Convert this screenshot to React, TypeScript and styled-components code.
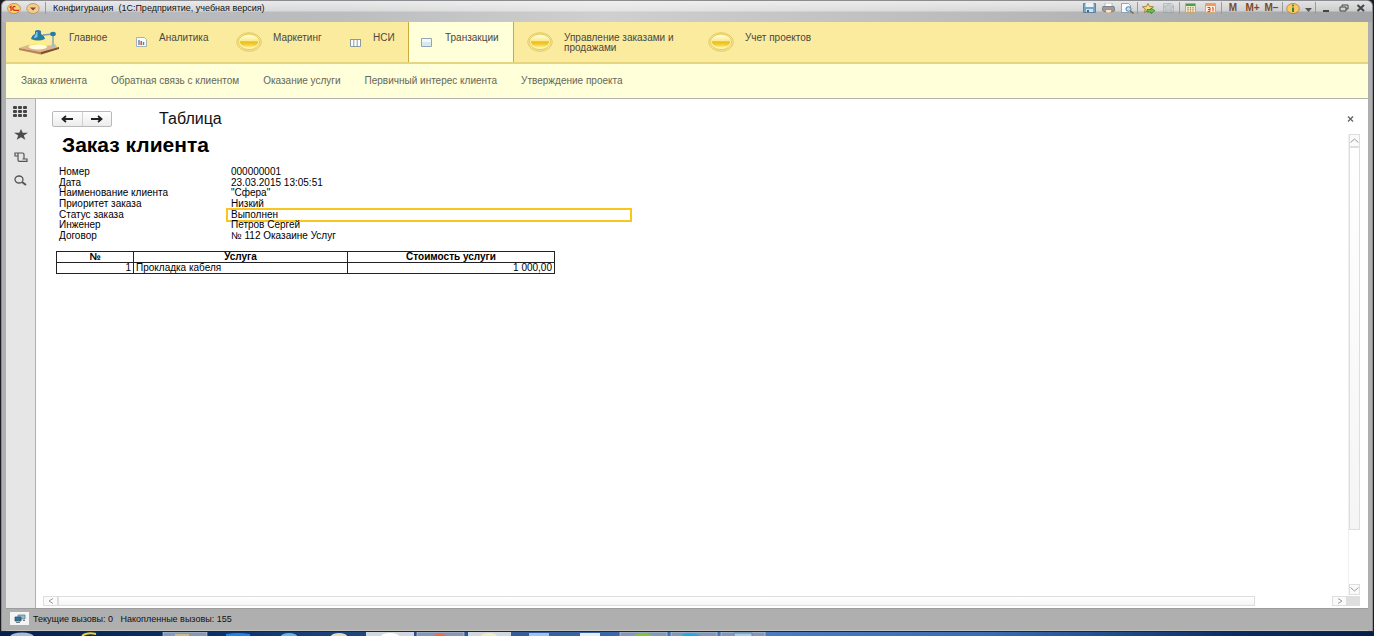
import React from 'react';
import styled, { createGlobalStyle, css } from 'styled-components';

const Global = createGlobalStyle`
  *, *::before, *::after { box-sizing: border-box; }
  body { margin: 0; background: #1b1b22; font-family: "Liberation Sans", Arial, sans-serif; font-size: 10px; line-height: 10px; color: #222; }
  button { font: inherit; color: inherit; padding: 0; border: 0; background: none; }
  a { color: inherit; text-decoration: none; }
  h1, h2, dl, dd, p { margin: 0; }
  svg { display: block; flex: none; }
`;

const Screen = styled.div`
  min-height: 100vh;
  display: flex;
  flex-direction: column;
`;

const AppWindow = styled.div`
  flex: 1;
  display: flex;
  flex-direction: column;
  margin: 0 1px;
  padding: 0 4px;
  border-radius: 6px 6px 0 0;
  background: #afafaf;
  border: solid #8c8c90;
  border-width: 1px 1px 0 1px;
`;

const TitleBar = styled.header`
  height: 21px;
  margin: 0 -4px;
  padding: 0 4px 7px 4px;
  display: flex;
  align-items: center;
  border-radius: 5px 5px 0 0;
  background:
    linear-gradient(#ffffffb0 0, #ffffff70 10px, #ffffff00 11px),
    linear-gradient(90deg, #b4b5b8 0, #bcbdbf 25%, #cfcfcf 44%, #bcbcbc 70%, #a2a3a6 100%);
`;

const TitleButton = styled.button<{ $w: number }>`
  width: ${(p) => p.$w}px;
  height: 14px;
  display: flex;
  align-items: center;
  justify-content: center;
`;

const MemoryButton = styled(TitleButton)`
  font-weight: 700;
  color: #7a4a28;
`;

const Divider = styled.span`
  width: 1px;
  height: 12px;
  margin: 0 1px;
  background: #9a9a9c;
`;

const TitleText = styled.span`
  margin-left: 6px;
  font-size: 9px;
  white-space: pre;
  color: #111;
`;

const Spacer = styled.span`
  flex: 1;
`;

const Sections = styled.nav`
  height: 42px;
  display: flex;
  background: #fbeb9e;
  border-bottom: 2px solid #e5d57f;
`;

const Section = styled.a<{ $icon: number; $gap: number; $w: number; $active?: boolean }>`
  width: ${(p) => p.$w}px;
  padding-left: 12px;
  display: grid;
  grid-template-columns: ${(p) => p.$icon}px 1fr;
  column-gap: ${(p) => p.$gap}px;
  color: #4b4740;
  border: solid transparent;
  border-width: 0 1px;
  ${(p) =>
    p.$active &&
    css`
      background: #ffffd9;
      border-color: #c9ad3c;
    `}
`;

const SectionIcon = styled.span`
  align-self: center;
`;

const SectionName = styled.span`
  padding-top: 11px;
`;

const Commands = styled.nav`
  height: 35px;
  display: flex;
  align-items: center;
  gap: 24px;
  padding-left: 15px;
  background: #ffffd9;
  border-bottom: 1px solid #b4b4ac;
  color: #66665a;
`;

const Body = styled.div`
  flex: 1;
  display: flex;
  background: #fff;
`;

const Tools = styled.aside`
  width: 30px;
  padding-top: 6px;
  display: flex;
  flex-direction: column;
  align-items: center;
  gap: 11px;
  background: #e6e6e6;
  border-right: 1px solid #b0b0b0;
`;

const ToolButton = styled.button`
  width: 16px;
  height: 12px;
  display: grid;
  place-items: center;
`;

const Content = styled.main`
  flex: 1;
  display: flex;
  flex-direction: column;
  min-width: 0;
`;

const FormHeader = styled.div`
  height: 35px;
  padding: 5px 12px 0 16px;
  display: flex;
  align-items: center;
`;

const History = styled.div`
  width: 60px;
  height: 16px;
  display: flex;
  border: 1px solid #b9b9b9;
  border-radius: 2px;
  background: linear-gradient(#fff, #ececec);
`;

const HistoryButton = styled.button`
  flex: 1;
  display: grid;
  place-items: center;
  & + & { border-left: 1px solid #d0d0d0; }
`;

const FormTitle = styled.h1`
  margin-left: 47px;
  font-size: 16px;
  line-height: 16px;
  font-weight: 400;
  color: #111;
`;

const CloseButton = styled.button`
  width: 12px;
  height: 12px;
  display: grid;
  place-items: center;
`;

const SheetArea = styled.div`
  flex: 1;
  display: flex;
`;

const Sheet = styled.div`
  flex: 1;
  padding-left: 20px;
  color: #000;
`;

const SheetTitle = styled.h2`
  padding: 1px 0 0 6px;
  font-size: 21px;
  line-height: 20px;
`;

const Fields = styled.dl`
  height: 74px;
  margin: 12px 0 0 3px;
  display: grid;
  grid-auto-rows: 1fr;
`;

const Field = styled.div`
  display: grid;
  grid-template-columns: 167px 406px;
  align-items: center;
`;

const Value = styled.dd<{ $selected?: boolean }>`
  padding: 0 5px;
  ${(p) =>
    p.$selected &&
    css`
      margin: -2px 0;
      padding: 0 3px;
      border: 2px solid #f8c61c;
    `}
`;

const Services = styled.table`
  width: 498px;
  margin-top: 10px;
  table-layout: fixed;
  border-collapse: collapse;
  th, td { height: 11px; padding: 0 2px; border: 1px solid #222; line-height: 10px; }
`;

const Cell = styled.td<{ $right?: boolean }>`
  text-align: ${(p) => (p.$right ? 'right' : 'left')};
`;

const VScroll = styled.div`
  width: 12px;
  margin-right: 8px;
  display: flex;
  flex-direction: column;
  border-left: 1px solid #f0f0f0;
`;

const HScroll = styled.div`
  height: 10px;
  margin: 1px 8px 2px 7px;
  display: flex;
`;

const ScrollButton = styled.button<{ $w: number; $h: number }>`
  flex: none;
  width: ${(p) => p.$w}px;
  height: ${(p) => p.$h}px;
  display: grid;
  place-items: center;
  border: 1px solid #dedede;
  background: #fafafa;
`;

const Thumb = styled.div<{ $grow: number }>`
  flex: ${(p) => p.$grow};
  border: 1px solid #dedede;
  background: linear-gradient(#fff, #f5f5f5);
`;

const Track = styled.div<{ $grow: number }>`
  flex: ${(p) => p.$grow};
`;

const Corner = styled.div`
  width: 13px;
  background: #dedede;
`;

const StatusBar = styled.footer`
  height: 23px;
  padding: 0 0 2px 4px;
  display: flex;
  align-items: center;
  gap: 4px;
  border-top: 1px solid #9c9c9c;
  border-bottom: 1px solid #c4c4bc;
  font-size: 9px;
  white-space: pre;
  color: #111;
`;

const StatusButton = styled.button`
  width: 19px;
  height: 13px;
  display: grid;
  place-items: center;
  background: #f4f4f4;
`;

const Taskbar = styled.div`
  height: 5px;
  display: flex;
  border-top: 1px solid #1a2836;
  background: linear-gradient(90deg, #06214d 0, #0b3068 15%, #315894 35%, #4a7cc4 56%, #3a6cb4 72%, #0b2c63 90%, #051f49 100%);
`;

const Coin = () => (
  <svg width="26" height="20" viewBox="0 0 26 20">
    <defs>
      <linearGradient id="coin" x2="0" y2="1">
        <stop offset="0" stopColor="#fffde0" />
        <stop offset=".45" stopColor="#fbe98a" />
        <stop offset=".52" stopColor="#e8bd1c" />
        <stop offset=".75" stopColor="#f2cf3a" />
        <stop offset="1" stopColor="#fff19a" />
      </linearGradient>
    </defs>
    <ellipse cx="13" cy="10" rx="12.3" ry="9.3" fill="#f6e694" stroke="#dcc467" strokeWidth=".8" />
    <ellipse cx="13" cy="9.8" rx="10.5" ry="7.8" fill="#fff6b4" stroke="#e2c23c" strokeWidth=".8" />
    <ellipse cx="13" cy="9.5" rx="9.2" ry="6.2" fill="url(#coin)" />
  </svg>
);

const Lamp = () => (
  <svg width="40" height="26" viewBox="0 0 40 26">
    <path d="M0 19 15 14 40 18 22 23z" fill="#dfb58a" />
    <path d="M0 19v2l22 4.500V23z" fill="#b9835a" />
    <path d="M22 23 40 18v2l-18 5.500z" fill="#7d5138" />
    <path d="M13 10 9 18q9 4 20-1l-5-7z" fill="#fff27a" opacity=".8" />
    <ellipse cx="19" cy="18" rx="9" ry="2.600" fill="#fffbe0" />
    <path d="M12 10q1-4 4-5V2q3-2 6 0v3q3 1 4 5-7 3-14 0z" fill="#287ba7" />
    <path d="M17 3h1.500v5L15 9.500q0-3 2-4.500z" fill="#84c5de" />
    <path d="M24 6 34 5v11" fill="none" stroke="#7c9cb0" strokeWidth="1.300" />
    <ellipse cx="34" cy="5" rx="2.800" ry="2.200" fill="#237ca8" />
    <ellipse cx="34.500" cy="16.500" rx="2.600" ry="1.200" fill="#a9bcc6" />
  </svg>
);

const Report = () => (
  <svg width="11" height="10" viewBox="0 0 11 10">
    <path d="M.5.5h8l2 2v7H.5z" fill="#f7fbfc" stroke="#a3b3b8" />
    <path d="M3 3v5" stroke="#5a73b8" strokeWidth="1.3" />
    <path d="M5.2 4v4" stroke="#dc4a42" strokeWidth="1.5" />
    <path d="M7.5 5v3" stroke="#4b9950" strokeWidth="1.4" />
  </svg>
);

const Columns = () => (
  <svg width="11" height="9" viewBox="0 0 11 9">
    <path d="M.5 1.5h10v7H.5z" fill="#fff" stroke="#889ba0" />
    <path d="M0 1.5h11M3.8 1v8M7.2 1v8" stroke="#889ba0" />
  </svg>
);

const Box = () => (
  <svg width="11" height="9" viewBox="0 0 11 9">
    <path d="M.5.5h10v8H.5z" fill="#dce8f0" stroke="#8ea9b5" />
    <path d="M1 1h9v3H1z" fill="#f3f8fb" />
  </svg>
);

const Logo = () => (
  <svg width="14" height="11" viewBox="0 0 14 11">
    <ellipse cx="7" cy="5.5" rx="6.4" ry="5" fill="#f9d66b" stroke="#ba8146" strokeWidth=".8" />
    <path d="M2.500 4.500 4 3.500V8M8.500 4Q6 2.500 5.800 5.300 5.800 7.300 8 7.300h4" fill="none" stroke="#d33024" strokeWidth="1.3" />
  </svg>
);

const MenuRound = () => (
  <svg width="14" height="11" viewBox="0 0 14 11">
    <ellipse cx="7" cy="5.5" rx="6.2" ry="5" fill="#f5cc8f" stroke="#b98d57" strokeWidth=".8" />
    <path d="M4 4.5h6L7 7.5z" fill="#7b4c2c" />
  </svg>
);

const Save = () => (
  <svg width="13" height="10" viewBox="0 0 13 10">
    <path d="M.5.5h12v9H.5z" fill="#7ba3c2" stroke="#5b83a2" />
    <path d="M2.5 0h8v4h-8z" fill="#eaf4f7" />
    <path d="M3 6h7v3H3z" fill="#d6e2e6" />
    <path d="M4 7h2v2H4z" fill="#416783" />
  </svg>
);

const Printer = () => (
  <svg width="13" height="10" viewBox="0 0 13 10">
    <path d="M3 0h7v4H3z" fill="#fff" stroke="#9ba5ab" strokeWidth=".7" />
    <path d="M1 3.5h11l1 4-2 1H2L0 7z" fill="#9c9da0" stroke="#67686b" strokeWidth=".7" />
    <path d="M3 6.5h7L9 10H4z" fill="#fbe4ca" stroke="#916f57" strokeWidth=".6" />
  </svg>
);

const Preview = () => (
  <svg width="13" height="11" viewBox="0 0 13 11">
    <path d="M.5.5h7l2 2v7h-9z" fill="#f8fbfd" stroke="#7795aa" strokeWidth=".8" />
    <ellipse cx="7.5" cy="6" rx="2.6" ry="2.3" fill="#bfdef1" stroke="#5a7f99" />
    <path d="m9.5 8 3 2.5" stroke="#96643d" strokeWidth="1.6" />
  </svg>
);

const star = 'm6 .5 1.6 3 4 .3-3 2.2 1 3.5L6 7.8 2.4 9.5l1-3.5-3-2.2 4-.3z';

const StarAdd = () => (
  <svg width="13" height="11" viewBox="0 0 13 11">
    <path d={star} fill="#fadb76" stroke="#98702e" strokeWidth=".8" />
    <path d="M5 6.500h4V5l4 2.800-4 2.800V9H5z" fill="#66c83c" stroke="#2e7d25" strokeWidth=".7" />
  </svg>
);

const StarPage = () => (
  <svg width="11" height="10" viewBox="0 0 12 11" opacity=".5">
    <path d="M.5.5h9l2 2v8H.5z" fill="#cbd0d4" stroke="#8a949b" />
    <path d={star} fill="#b9c2c8" stroke="#78848c" strokeWidth=".6" />
  </svg>
);

const Calculator = () => (
  <svg width="11" height="10" viewBox="0 0 11 10">
    <path d="M.5.5h10v9H.5z" fill="#f6e9c9" stroke="#c3a87c" />
    <path d="M1 1h9v2H1z" fill="#4c9a55" />
    <path d="M3 4v5M5.5 4v5M8 4v5" stroke="#a58a50" strokeWidth="1.2" strokeDasharray="1.2 .6" />
  </svg>
);

const Calendar = () => (
  <svg width="11" height="10" viewBox="0 0 11 10">
    <path d="M.5.5h10v9H.5z" fill="#fff1d9" stroke="#d0a880" />
    <path d="M1 1h9v2H1z" fill="#f09a6a" />
    <path d="M2.5 4.500H5v4H2.500M3 6.500h2M7 5l1-.5v4" fill="none" stroke="#dc3f28" />
  </svg>
);

const Info = () => (
  <svg width="14" height="11" viewBox="0 0 14 11">
    <ellipse cx="7" cy="5.5" rx="6.3" ry="5" fill="#f9cb67" stroke="#b37835" strokeWidth=".8" />
    <path d="M7 1.800v1.400M7 4.500V9" stroke="#378237" strokeWidth="2" />
  </svg>
);

const Stroke = ({ d, w = 10, h = 8, c = '#444', s = 1.4 }: { d: string; w?: number; h?: number; c?: string; s?: number }) => (
  <svg width={w} height={h} viewBox={`0 0 ${w} ${h}`}>
    <path d={d} fill="none" stroke={c} strokeWidth={s} />
  </svg>
);

const GridDots = () => (
  <svg width="15" height="11" viewBox="0 0 15 11" fill="#444">
    {[0, 4, 8].map((y) => [0, 5, 10].map((x) => <rect key={`${x}-${y}`} x={x} y={y} width="4" height="3" rx="1" />))}
  </svg>
);

const StarSolid = () => (
  <svg width="14" height="11" viewBox="0 0 14 11">
    <path d="m7 0 1.7 3.8H14L9.8 6.500l1.500 4.300L7 8.300l-4.300 2.500 1.500-4.300L0 3.800h5.300z" fill="#4b4b4b" />
  </svg>
);

const Magnifier = () => (
  <svg width="13" height="11" viewBox="0 0 13 11">
    <ellipse cx="5" cy="4.5" rx="4" ry="3.5" fill="none" stroke="#555" strokeWidth="1.3" />
    <path d="m8 7 4 3" stroke="#555" strokeWidth="2" />
  </svg>
);

const Servers = () => (
  <svg width="12" height="9" viewBox="0 0 12 9">
    <path d="M4 1h7v4H4z" fill="#9fb9c8" stroke="#5b7d91" strokeWidth=".8" />
    <path d="M1 3h6v4H1z" fill="#2f7199" stroke="#34566b" strokeWidth=".8" />
    <path d="M2 8.500h4M9 6.500h2" stroke="#777" />
  </svg>
);

const TaskbarIcons = () => (
  <svg width="770" height="4" viewBox="0 0 770 4">
    <g fill="#8798b5" stroke="#d0dae8" strokeWidth=".6">
      <path d="M163 0h44v5h-44zM417 0h47v5h-47zM620 0h47v5h-47zM671 0h46v5h-46zM721 0h44v5h-44z" />
    </g>
    <path d="M366 0h48v5h-48zM468 0h43v5h-43z" fill="#d2d8e2" />
    <ellipse cx="22" cy="5" rx="12" ry="4.5" fill="#a8bdd1" />
    <path d="M82 4q5-4 14-2" fill="none" stroke="#f3d02d" strokeWidth="2" />
    <path d="M175 2h14v3h-14z" fill="#c8b98a" />
    <path d="M226 2q12-2 24 0v3h-24z" fill="#2583e6" />
    <ellipse cx="289" cy="4" rx="8" ry="3" fill="#69b7e2" />
    <ellipse cx="339" cy="4" rx="8" ry="3" fill="#e3ddbd" />
    <ellipse cx="390" cy="4" rx="9" ry="3" fill="#fff" />
    <ellipse cx="440" cy="4" rx="7" ry="2.5" fill="#e36c55" />
    <ellipse cx="489" cy="4" rx="8" ry="3" fill="#f2edc3" />
    <path d="M529 1h20v4h-20z" fill="#9dc4ee" />
    <path d="M580 1h20v4h-20z" fill="#e8edf2" />
    <ellipse cx="643" cy="4" rx="9" ry="3" fill="#83c23d" />
    <path d="M682 2q10-2 18 1v2h-15z" fill="#22a9e3" />
    <path d="M734 1h18v4h-18z" fill="#a9cbe6" stroke="#5e86ac" />
  </svg>
);

const sections = [
  { name: 'Главное', w: 117, icon: 40, gap: 10, art: <Lamp /> },
  { name: 'Аналитика', w: 100, icon: 11, gap: 12, art: <Report /> },
  { name: 'Маркетинг', w: 114, icon: 26, gap: 11, art: <Coin /> },
  { name: 'НСИ', w: 71, icon: 11, gap: 12, art: <Columns /> },
  { name: 'Транзакции', w: 106, icon: 11, gap: 13, art: <Box />, active: true },
  { name: 'Управление заказами и продажами', w: 181, icon: 26, gap: 11, art: <Coin /> },
  { name: 'Учет проектов', w: 140, icon: 26, gap: 11, art: <Coin /> },
];

const commands = ['Заказ клиента', 'Обратная связь с клиентом', 'Оказание услуги', 'Первичный интерес клиента', 'Утверждение проекта'];

const fields: { label: string; value: string; selected?: boolean }[] = [
  { label: 'Номер', value: '000000001' },
  { label: 'Дата', value: '23.03.2015 13:05:51' },
  { label: 'Наименование клиента', value: '"Сфера"' },
  { label: 'Приоритет заказа', value: 'Низкий' },
  { label: 'Статус заказа', value: 'Выполнен', selected: true },
  { label: 'Инженер', value: 'Петров Сергей' },
  { label: 'Договор', value: '№ 112 Оказаине Услуг' },
];

export default function App() {
  return (
    <Screen>
      <Global />
      <AppWindow>
        <TitleBar>
          <TitleButton $w={16} aria-label="1С"><Logo /></TitleButton>
          <TitleButton $w={22} aria-label="Меню"><MenuRound /></TitleButton>
          <Divider />
          <TitleText>{'Конфигурация  (1С:Предприятие, учебная версия)'}</TitleText>
          <Spacer />
          <TitleButton $w={20} aria-label="Сохранить"><Save /></TitleButton>
          <TitleButton $w={19} aria-label="Печать"><Printer /></TitleButton>
          <TitleButton $w={18} aria-label="Просмотр"><Preview /></TitleButton>
          <Divider />
          <TitleButton $w={19} aria-label="В избранное"><StarAdd /></TitleButton>
          <TitleButton $w={20} aria-label="Избранное"><StarPage /></TitleButton>
          <Divider />
          <TitleButton $w={19} aria-label="Калькулятор"><Calculator /></TitleButton>
          <TitleButton $w={20} aria-label="Календарь"><Calendar /></TitleButton>
          <Divider />
          <MemoryButton $w={20}>M</MemoryButton>
          <MemoryButton $w={19}>M+</MemoryButton>
          <MemoryButton $w={19}>M−</MemoryButton>
          <Divider />
          <TitleButton $w={18} aria-label="Информация"><Info /></TitleButton>
          <TitleButton $w={12} aria-label="Ещё">
            <svg width="7" height="8" viewBox="0 0 7 8"><path d="M0 4h7L3.500 8z" fill="#555" /></svg>
          </TitleButton>
          <Divider />
          <TitleButton $w={18} aria-label="Свернуть"><Stroke d="M2 7h6" s={2} /></TitleButton>
          <TitleButton $w={18} aria-label="Восстановить"><Stroke d="M3 2.500V1h6v4H7M1 3h6v4H1z" s={1} /></TitleButton>
          <TitleButton $w={15} aria-label="Закрыть"><Stroke d="M1.500 1 8 7M8 1 1.500 7" s={2} /></TitleButton>
        </TitleBar>
        <Sections>
          {sections.map((s) => (
            <Section key={s.name} href="#" $w={s.w} $icon={s.icon} $gap={s.gap} $active={s.active}>
              <SectionIcon>{s.art}</SectionIcon>
              <SectionName>{s.name}</SectionName>
            </Section>
          ))}
        </Sections>
        <Commands>
          {commands.map((c) => <a key={c} href="#">{c}</a>)}
        </Commands>
        <Body>
          <Tools>
            <ToolButton aria-label="Меню функций"><GridDots /></ToolButton>
            <ToolButton aria-label="Избранное"><StarSolid /></ToolButton>
            <ToolButton aria-label="История">
              <Stroke w={14} h={10} s={1.2} c="#555" d="M4 4H1V1h7.500q1.500 0 1.500 1.500V7M4 1v7q0 1.300 1.300 1.300H13V7H8.500" />
            </ToolButton>
            <ToolButton aria-label="Поиск"><Magnifier /></ToolButton>
          </Tools>
          <Content>
            <FormHeader>
              <History>
                <HistoryButton aria-label="Назад"><Stroke w={12} s={1.8} c="#222" d="M12 4H2M5 1 1.500 4 5 7" /></HistoryButton>
                <HistoryButton aria-label="Вперёд"><Stroke w={12} s={1.8} c="#222" d="M0 4h10M7 1l3.500 3L7 7" /></HistoryButton>
              </History>
              <FormTitle>Таблица</FormTitle>
              <Spacer />
              <CloseButton aria-label="Закрыть форму"><Stroke w={7} h={6} d="M1 .5 6 5.500M6 .5 1 5.500" c="#666" /></CloseButton>
            </FormHeader>
            <SheetArea>
              <Sheet>
                <SheetTitle>Заказ клиента</SheetTitle>
                <Fields>
                  {fields.map((f) => (
                    <Field key={f.label}>
                      <dt>{f.label}</dt>
                      <Value $selected={f.selected}>{f.value}</Value>
                    </Field>
                  ))}
                </Fields>
                <Services>
                  <colgroup><col width="77" /><col width="214" /><col width="207" /></colgroup>
                  <thead>
                    <tr><th>№</th><th>Услуга</th><th>Стоимость услуги</th></tr>
                  </thead>
                  <tbody>
                    <tr><Cell $right>1</Cell><Cell>Прокладка кабеля</Cell><Cell $right>1 000,00</Cell></tr>
                  </tbody>
                </Services>
              </Sheet>
              <VScroll>
                <ScrollButton $w={11} $h={13} aria-label="Вверх"><Stroke w={9} h={5} s={1} c="#999" d="M.5 4.500 4.500 1l4 3.500" /></ScrollButton>
                <Thumb $grow={385} />
                <Track $grow={54} />
                <ScrollButton $w={11} $h={11} aria-label="Вниз"><Stroke w={9} h={5} s={1} c="#999" d="M.5 .5 4.500 4l4-3.500" /></ScrollButton>
              </VScroll>
            </SheetArea>
            <HScroll>
              <ScrollButton $w={15} $h={10} aria-label="Влево"><Stroke w={6} h={6} s={1} c="#999" d="M5 .5 1 3l4 2.500" /></ScrollButton>
              <Thumb $grow={1197} />
              <Track $grow={77} />
              <ScrollButton $w={15} $h={10} aria-label="Вправо"><Stroke w={6} h={6} s={1} c="#999" d="M1 .5 5 3 1 5.500" /></ScrollButton>
              <Corner />
            </HScroll>
          </Content>
        </Body>
        <StatusBar>
          <StatusButton aria-label="Вызовы сервера"><Servers /></StatusButton>
          <span>{'Текущие вызовы: 0   Накопленные вызовы: 155'}</span>
        </StatusBar>
      </AppWindow>
      <Taskbar><TaskbarIcons /></Taskbar>
    </Screen>
  );
}
